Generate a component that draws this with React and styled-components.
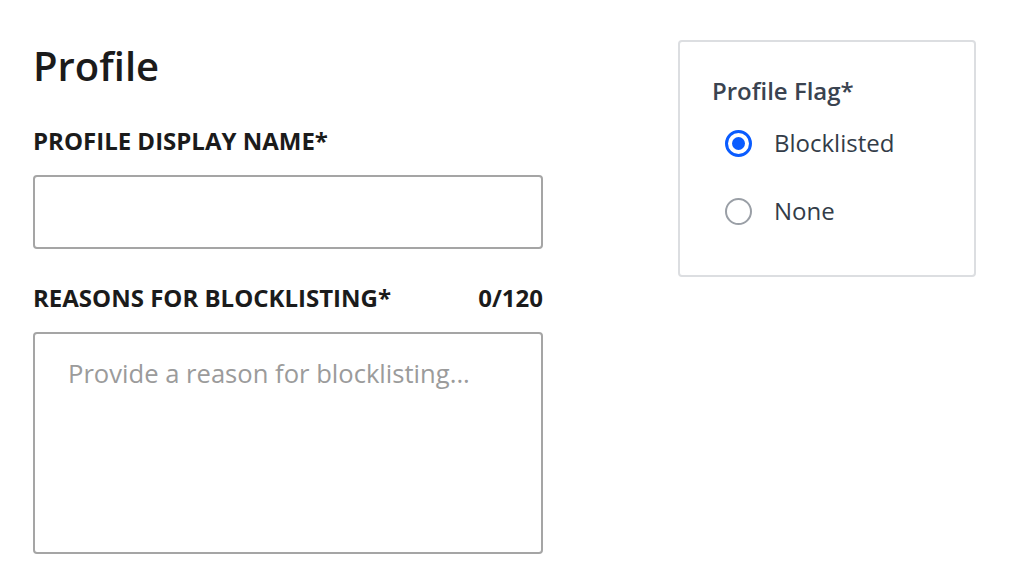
import React, { useState } from 'react';
import styled, { createGlobalStyle } from 'styled-components';

const GlobalStyle = createGlobalStyle`
  body {
    margin: 0;
    background: #ffffff;
    font-family: "Open Sans", "Noto Sans", sans-serif;
  }
`;

const Page = styled.div`
  display: flex;
  align-items: flex-start;
  gap: 135px;
  padding: 40px 0 0 33px;
`;

const FormColumn = styled.div`
  width: 510px;
  display: flex;
  flex-direction: column;
`;

const Title = styled.h1`
  margin: 2px 0 37px;
  font-size: 40px;
  line-height: 48px;
  font-weight: 600;
  color: #1b1b1b;
`;

const LabelRow = styled.div`
  display: flex;
  justify-content: space-between;
  align-items: baseline;
  margin-bottom: 20px;
`;

const Label = styled.label`
  font-size: 24px;
  line-height: 28px;
  font-weight: 700;
  color: #1b1b1b;
`;

const Counter = styled.span`
  font-size: 24px;
  line-height: 28px;
  font-weight: 700;
  color: #1b1b1b;
`;

const TextInput = styled.input`
  box-sizing: border-box;
  width: 100%;
  height: 74px;
  margin: 0 0 35px;
  padding: 0 33px;
  border: 2px solid #a5a5a5;
  border-radius: 4px;
  font-family: inherit;
  font-size: 26px;
  outline: none;
`;

const TextArea = styled.textarea`
  box-sizing: border-box;
  width: 100%;
  height: 222px;
  margin: 0;
  padding: 22px 33px;
  border: 2px solid #a5a5a5;
  border-radius: 4px;
  font-family: inherit;
  font-size: 25.6px;
  line-height: 36px;
  resize: none;
  outline: none;
  color: #1b1b1b;

  &::placeholder {
    color: #9b9b9b;
  }
`;

const FlagCard = styled.fieldset`
  box-sizing: border-box;
  width: 298px;
  height: 237px;
  margin: 0;
  padding: 35px 32px 0;
  border: 2px solid #dcdee1;
  border-radius: 4px;
`;

const Legend = styled.div`
  font-size: 24px;
  line-height: 28px;
  font-weight: 600;
  color: #3a4350;
  margin-bottom: 14px;
`;

const Options = styled.div`
  display: flex;
  flex-direction: column;
  gap: 20px;
`;

const Option = styled.label`
  display: flex;
  align-items: center;
  gap: 22px;
  padding-left: 13px;
  font-size: 24px;
  line-height: 48px;
  color: #333c48;
  cursor: pointer;
`;

const Radio = styled.span`
  box-sizing: border-box;
  flex: none;
  width: 27px;
  height: 27px;
  border-radius: 50%;
  border: ${(p) => (p.checked ? '3px solid #0a5cff' : '2.5px solid #9a9fa6')};
  display: flex;
  align-items: center;
  justify-content: center;

  &::after {
    content: '';
    width: 13px;
    height: 13px;
    border-radius: 50%;
    background: ${(p) => (p.checked ? '#0a5cff' : 'transparent')};
  }
`;

const HiddenInput = styled.input`
  display: none;
`;

const flags = ['Blocklisted', 'None'];

export default function App() {
  const [flag, setFlag] = useState('Blocklisted');
  const [reason, setReason] = useState('');

  return (
    <>
      <GlobalStyle />
      <Page>
        <FormColumn>
          <Title>Profile</Title>
          <LabelRow>
            <Label htmlFor="display-name">PROFILE DISPLAY NAME*</Label>
          </LabelRow>
          <TextInput id="display-name" type="text" />
          <LabelRow>
            <Label htmlFor="reason">REASONS FOR BLOCKLISTING*</Label>
            <Counter>{reason.length}/120</Counter>
          </LabelRow>
          <TextArea
            id="reason"
            maxLength={120}
            placeholder="Provide a reason for blocklisting..."
            value={reason}
            onChange={(e) => setReason(e.target.value)}
          />
        </FormColumn>
        <FlagCard>
          <Legend>Profile Flag*</Legend>
          <Options>
            {flags.map((f) => (
              <Option key={f}>
                <HiddenInput type="radio" name="flag" checked={flag === f} onChange={() => setFlag(f)} />
                <Radio checked={flag === f} />
                {f}
              </Option>
            ))}
          </Options>
        </FlagCard>
      </Page>
    </>
  );
}
